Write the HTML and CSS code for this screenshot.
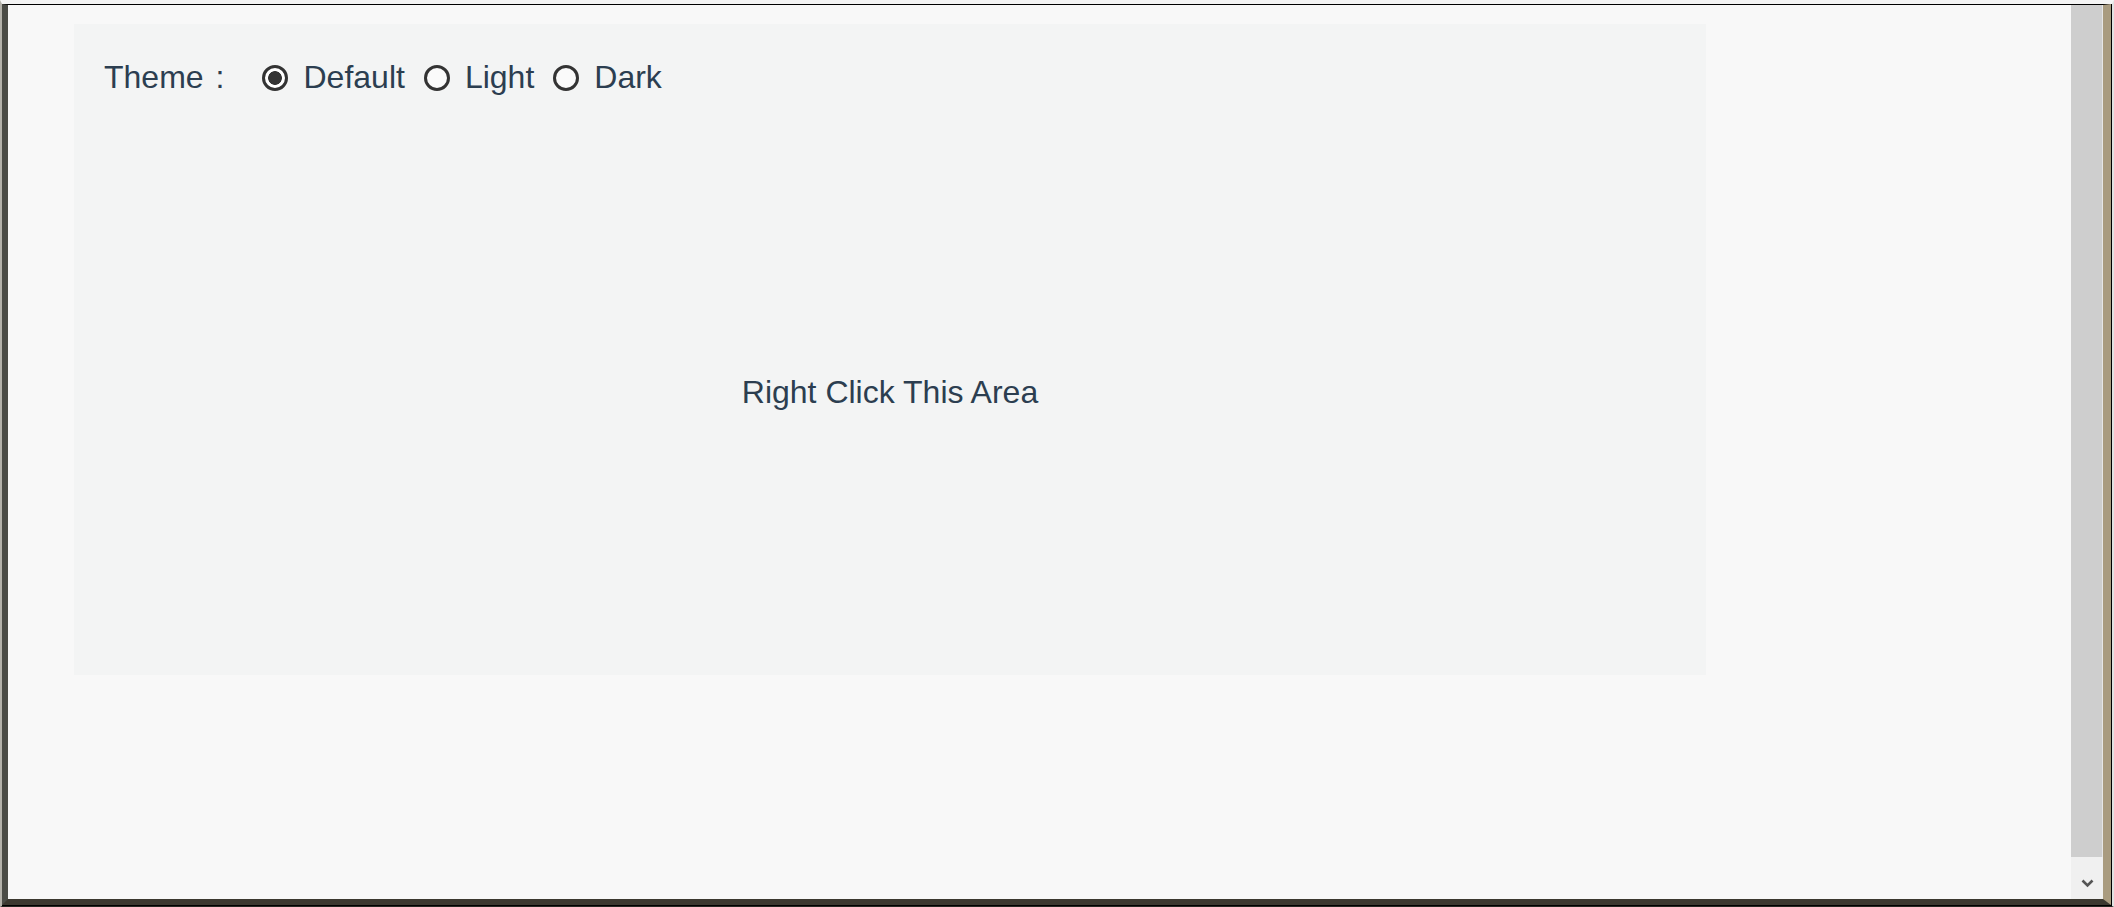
FILE: index.html
```html
<!DOCTYPE html>
<html lang="en">
<head>
<meta charset="utf-8">
<title>Context Menu Theme</title>
<link rel="stylesheet" href="styles.css">
</head>
<body>
<div class="desk">
  <div class="win">
    <div class="page">
      <div class="panel">
        <div class="bar">
          <span class="lbl">Theme<span class="colon">:</span></span>
          <label class="opt first"><input type="radio" name="theme" checked><span class="txt">Default</span></label>
          <label class="opt"><input type="radio" name="theme"><span class="txt">Light</span></label>
          <label class="opt"><input type="radio" name="theme"><span class="txt">Dark</span></label>
        </div>
        <div class="area"><span class="hint">Right Click This Area</span></div>
      </div>
    </div>
    <div class="scroll">
      <div class="thumb"></div>
      <div class="btn">
        <svg width="13" height="9" viewBox="0 0 13 9"><polyline points="1.5,1.5 6.5,6.5 11.5,1.5" fill="none" stroke="#555" stroke-width="2.6"/></svg>
      </div>
    </div>
  </div>
</div>
</body>
</html>
```
FILE: styles.css
```css
html, body {
  margin: 0;
  padding: 0;
  width: 2114px;
  height: 907px;
  overflow: hidden;
}

.desk {
  width: 2114px;
  height: 907px;
  box-sizing: border-box;
  background: #000;
  border-top: 4px solid #f4f4f4;
  border-left: 2px solid #b4b2aa;
  border-right: 2px solid #e2e2e2;
  border-bottom: 1px solid #262822;
  padding: 0 1px 1px 0;
  display: flex;
}

.win {
  flex: 1;
  display: flex;
  border-top: 1px solid #000;
  border-left: 6px solid #4b4c46;
  border-right: 8px solid #a99b7f;
  border-bottom: 6px solid #3b382f;
}

.page {
  flex: 1;
  background: #f8f8f8;
  padding: 19px 0 0 66px;
  font-family: "Liberation Sans", Arial, sans-serif;
  color: #2c3e50;
  font-size: 32px;
}

.panel {
  width: 1632px;
  height: 651px;
  box-sizing: border-box;
  background: #f3f4f4;
  padding-top: 35px;
  display: flex;
  flex-direction: column;
}

.bar {
  display: flex;
  align-items: center;
  height: 37px;
  line-height: 37px;
  margin-left: 30px;
}

.colon {
  margin-left: 12px;
}

.opt {
  display: flex;
  align-items: center;
  margin-left: 19px;
}

.opt.first {
  margin-left: 38px;
}

.opt input {
  -webkit-appearance: none;
  appearance: none;
  width: 26px;
  height: 26px;
  margin: 0;
  box-sizing: border-box;
  border: 3px solid #333;
  border-radius: 50%;
  background: #fafafa;
}

.opt input:checked {
  background: radial-gradient(circle, #333 0 6.5px, #fff 7.2px);
}

.txt {
  margin-left: 15px;
}

.area {
  flex: 1;
  margin-top: 14px;
  display: flex;
  align-items: center;
  justify-content: center;
}

.hint {
  line-height: 37px;
}

.scroll {
  width: 32px;
  display: flex;
  flex-direction: column;
}

.thumb {
  flex: 1;
  background: #cecece;
  border-right: 1px solid #e6e6e6;
}

.btn {
  height: 42px;
  background: #f0f0f0;
  display: flex;
  justify-content: center;
  align-items: flex-start;
  padding-top: 22px;
  box-sizing: border-box;
}
```
